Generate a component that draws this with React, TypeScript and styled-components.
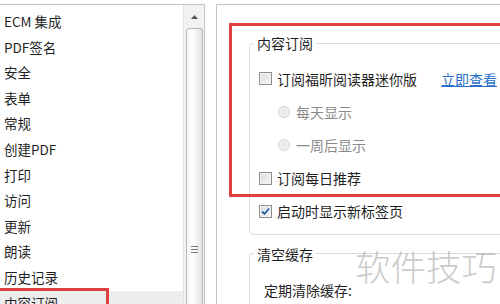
import React from 'react';
import styled, { createGlobalStyle } from 'styled-components';

const GlobalStyle = createGlobalStyle`
  html, body {
    margin: 0;
    padding: 0;
    background: #fff;
  }
  body {
    font-family: "Noto Sans CJK SC", "Liberation Sans", sans-serif;
    color: #1f1f1f;
  }
`;

const Page = styled.div`
  width: 500px;
  height: 304px;
  overflow: hidden;
  display: flex;
  align-items: stretch;
`;

const LeftPanel = styled.div`
  position: relative;
  width: 205px;
  margin-top: 4px;
  border-top: 1px solid #c4c4c4;
  border-right: 1px solid #c4c4c4;
  box-sizing: border-box;
  display: flex;
`;

const List = styled.ul`
  position: relative;
  flex: 1;
  margin: 0;
  padding: 4px 0 0 0;
  list-style: none;
`;

const Item = styled.li<{ selected?: boolean }>`
  height: 25.6px;
  line-height: 25.6px;
  padding-left: 4px;
  font-size: 13.5px;
  white-space: nowrap;
  background: ${(p) => (p.selected ? '#ededed' : 'transparent')};
`;

const Scrollbar = styled.div`
  width: 20px;
  background: #f2f2f2;
  border-left: 1px solid #e4e4e4;
  display: flex;
  flex-direction: column;
  align-items: center;
`;

const ArrowButton = styled.div`
  height: 23px;
  width: 100%;
  display: flex;
  align-items: center;
  justify-content: center;
`;

const Thumb = styled.div`
  flex: 1;
  width: 17px;
  box-sizing: border-box;
  border: 1px solid #b9b9b9;
  border-bottom: none;
  border-radius: 3px 3px 0 0;
  background: linear-gradient(to right, #f6f6f6, #fefefe 40%, #e2e2e2);
  display: flex;
  justify-content: center;
  padding-top: 217px;
`;

const Grip = styled.div`
  width: 7px;
  height: 9px;
  background: repeating-linear-gradient(to bottom, #777 0 1px, transparent 1px 3px);
`;

const RightPanel = styled.div`
  position: relative;
  flex: 1;
  margin-top: 4px;
  margin-left: 11px;
  border-top: 1px solid #c4c4c4;
  border-left: 1px solid #c4c4c4;
  padding: 28px 0 0 32px;
`;

const Group = styled.fieldset<{ gap?: number }>`
  margin: ${(p) => p.gap ?? 0}px -40px 0 0;
  padding: 9px 0 6px 9px;
  border: 1px solid #d6dde2;
  border-radius: 4px;
  min-width: 0;
`;

const Legend = styled.legend`
  font-size: 14px;
  line-height: 20px;
  padding: 0 3px;
  margin-left: -5px;
  color: #1f1f1f;
`;

const Row = styled.div<{ indent?: boolean }>`
  height: 33.2px;
  display: flex;
  align-items: center;
  padding-left: ${(p) => (p.indent ? 19 : 0)}px;
  font-size: 14px;
  white-space: nowrap;
`;

const Box = styled.span<{ checked?: boolean }>`
  width: 13px;
  height: 13px;
  flex: none;
  box-sizing: border-box;
  border: 1px solid #8e8e8e;
  background: linear-gradient(135deg, #dcdcdc, #f7f7f7);
  margin-right: 5px;
  display: inline-flex;
  align-items: center;
  justify-content: center;
  box-shadow: inset 0 0 0 1px #f3f3f3;
`;

const Radio = styled.span`
  width: 12px;
  height: 12px;
  flex: none;
  box-sizing: border-box;
  border-radius: 50%;
  border: 1px solid #d2d2d2;
  background: radial-gradient(circle at 50% 50%, #e6e6e6, #f6f6f6);
  margin-right: 6px;
`;

const Label = styled.span<{ disabled?: boolean; width?: number }>`
  color: ${(p) => (p.disabled ? '#8a8a8a' : '#1f1f1f')};
  ${(p) => (p.width ? `display: inline-block; width: ${p.width}px;` : '')}
`;

const Link = styled.a`
  color: #2a6fc9;
  text-decoration: underline;
  cursor: pointer;
`;

const Highlight = styled.div`
  position: absolute;
  border: 3px solid #e0403f;
  pointer-events: none;
`;

const Watermark = styled.div`
  position: absolute;
  left: 138px;
  top: 235px;
  font-size: 35.5px;
  font-weight: 300;
  color: rgba(150, 150, 150, 0.5);
  font-family: "Noto Sans CJK SC", sans-serif;
  white-space: nowrap;
`;

const items = ['ECM 集成', 'PDF签名', '安全', '表单', '常规', '创建PDF', '打印', '访问', '更新', '朗读', '历史记录', '内容订阅'];

const Check = () => (
  <svg width="9" height="9" viewBox="0 0 9 9">
    <path d="M1 4.5 L3.5 7 L8 1.5" fill="none" stroke="#2c5fa8" strokeWidth="1.8" />
  </svg>
);

const App: React.FC = () => {
  return (
    <>
      <GlobalStyle />
      <Page>
        <LeftPanel>
          <List>
            {items.map((name) => (
              <Item key={name} selected={name === '内容订阅'}>
                {name}
              </Item>
            ))}
            <Highlight style={{ left: -4, top: 283, width: 107, height: 30 }} />
          </List>
          <Scrollbar>
            <ArrowButton>
              <svg width="7" height="4" viewBox="0 0 7 4">
                <path d="M0 4 L3.5 0 L7 4 Z" fill="#555" />
              </svg>
            </ArrowButton>
            <Thumb>
              <Grip />
            </Thumb>
          </Scrollbar>
        </LeftPanel>
        <RightPanel>
          <Group>
            <Legend>内容订阅</Legend>
            <Row>
              <Box />
              <Label width={164}>订阅福昕阅读器迷你版</Label>
              <Link>立即查看</Link>
            </Row>
            <Row indent>
              <Radio />
              <Label disabled>每天显示</Label>
            </Row>
            <Row indent>
              <Radio />
              <Label disabled>一周后显示</Label>
            </Row>
            <Row>
              <Box />
              <Label>订阅每日推荐</Label>
            </Row>
            <Row>
              <Box checked>
                <Check />
              </Box>
              <Label>启动时显示新标签页</Label>
            </Row>
          </Group>
          <Group gap={9}>
            <Legend>清空缓存</Legend>
            <Row style={{ paddingLeft: 5 }}>
              <Label>定期清除缓存:</Label>
            </Row>
          </Group>
          <Highlight style={{ left: 12, top: 18, right: -10, height: 168 }} />
          <Watermark>软件技巧</Watermark>
        </RightPanel>
      </Page>
    </>
  );
};

export default App;
